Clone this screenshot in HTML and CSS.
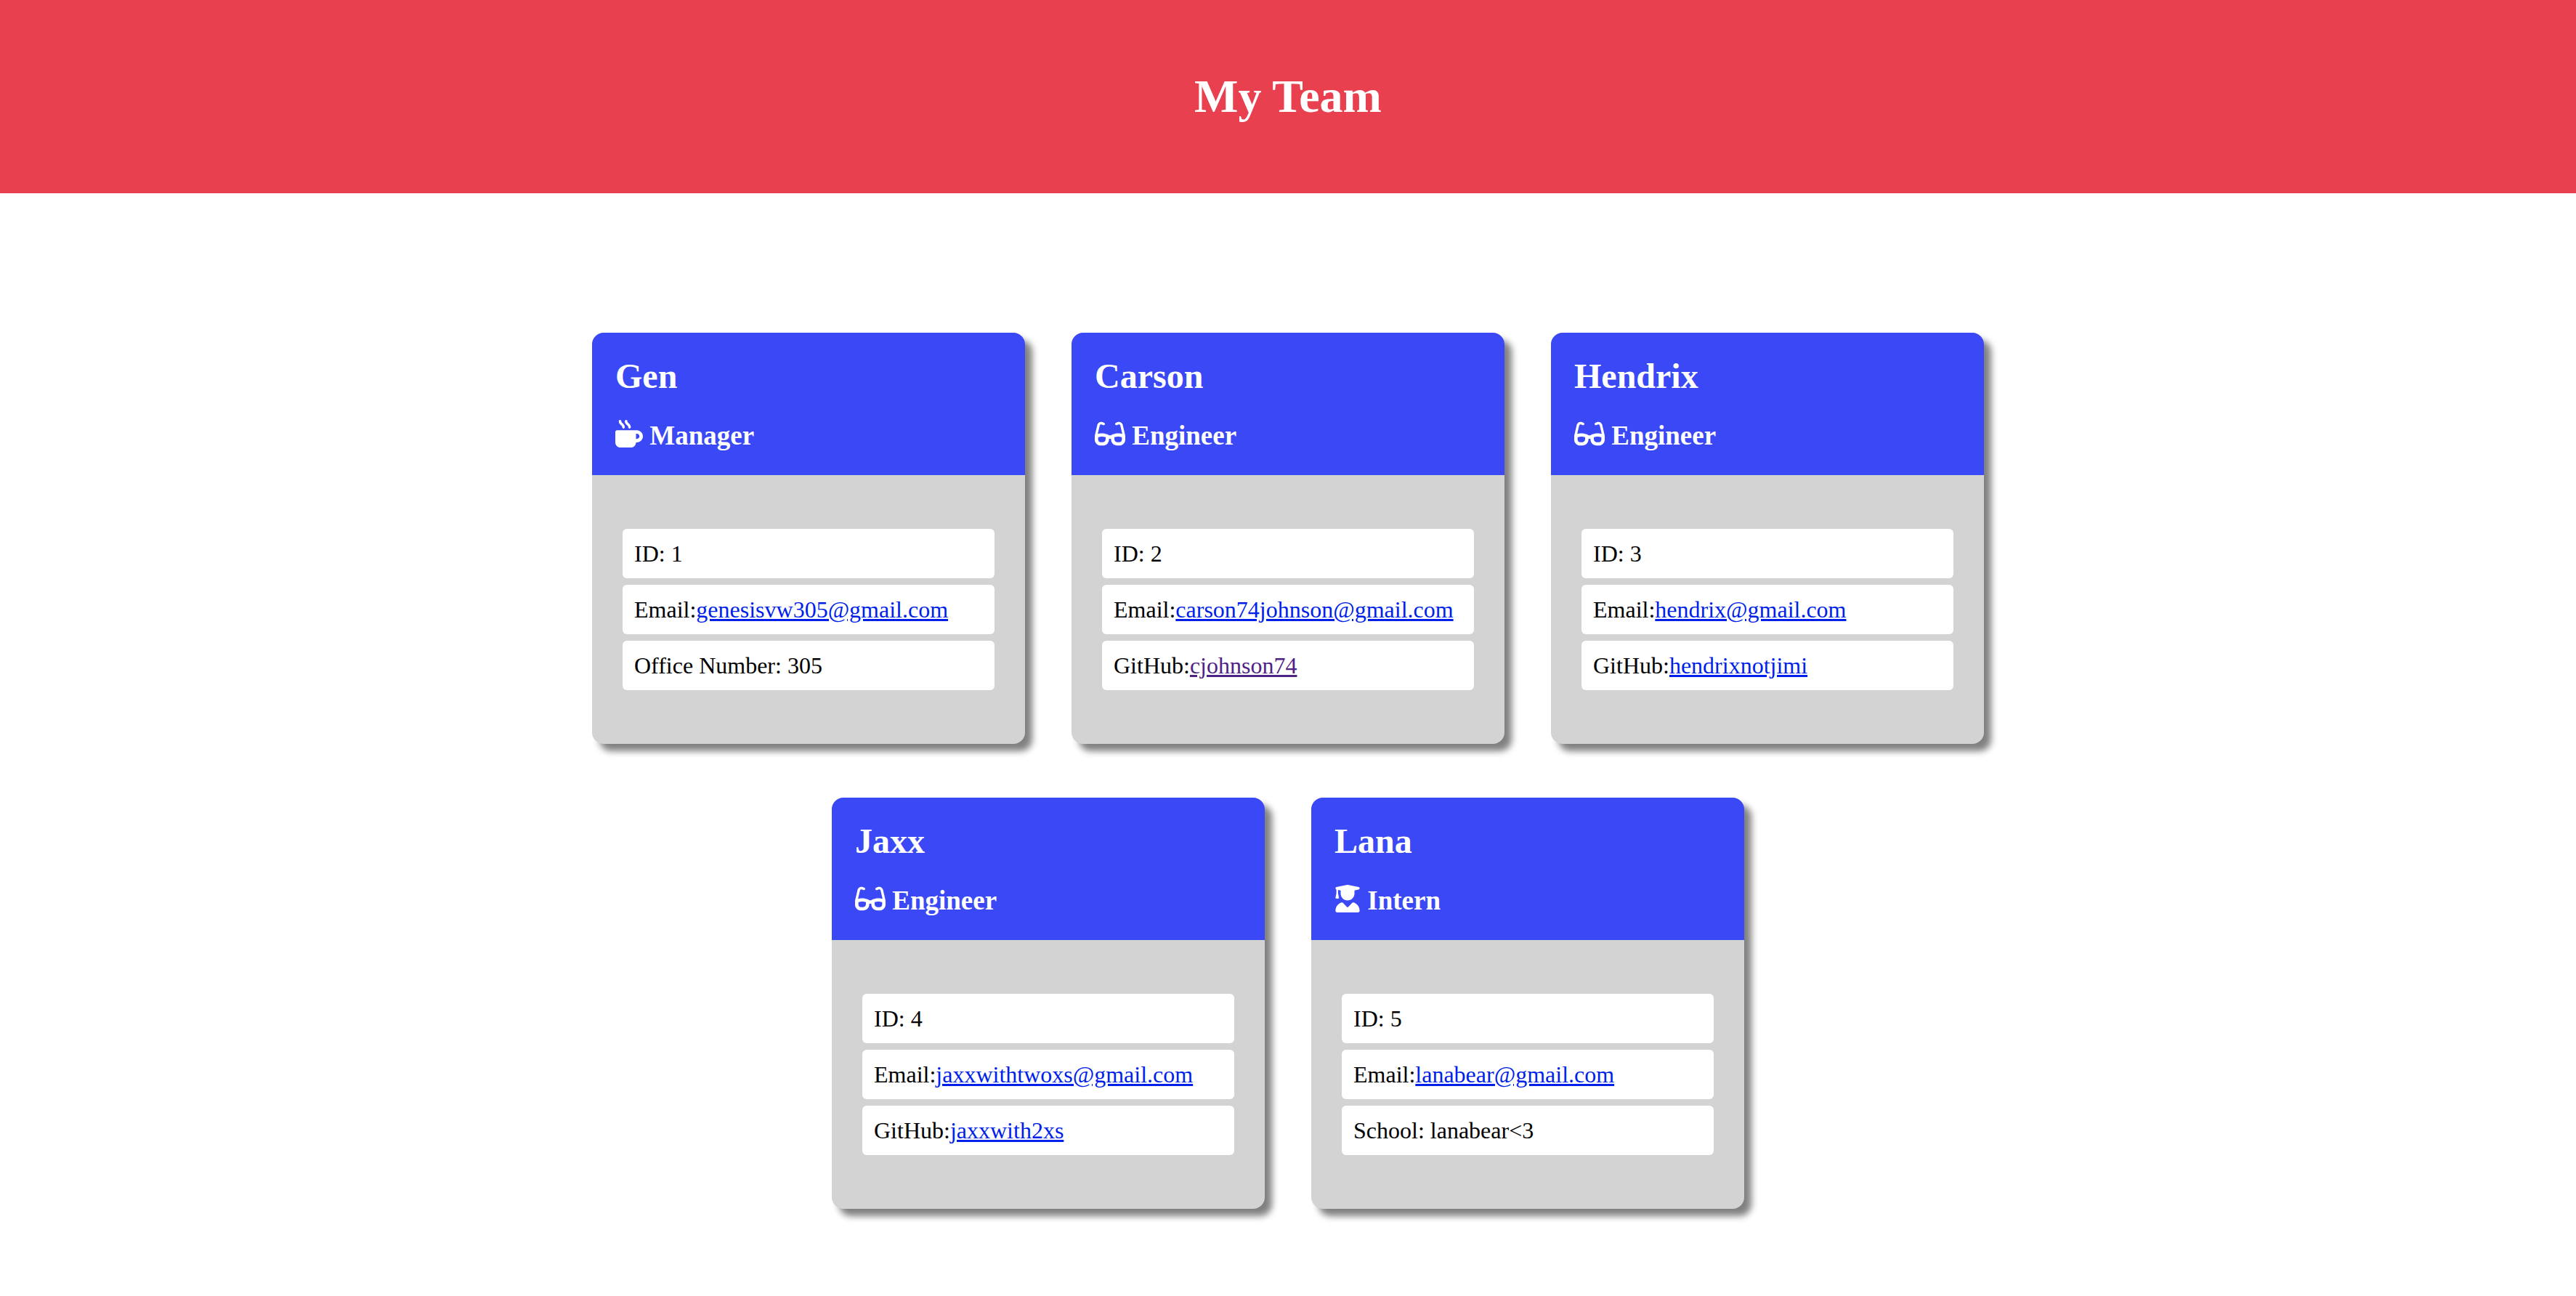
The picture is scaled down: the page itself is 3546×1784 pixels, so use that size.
FILE: index.html
```html
<!DOCTYPE html>
<html lang="en">
<head>
<meta charset="utf-8">
<meta name="viewport" content="width=device-width, initial-scale=1">
<title>My Team</title>
<link rel="stylesheet" href="styles.css">
</head>
<body>
<svg class="sprite" aria-hidden="true">
  <symbol id="mug" viewBox="0 0 512 512">
    <path d="M88 0C74.700 0 64 10.700 64 24c0 38.900 23.400 59.400 39.100 73.100l1.100 1C120.500 112.300 128 119.900 128 136c0 13.300 10.700 24 24 24s24-10.700 24-24c0-38.900-23.400-59.400-39.100-73.100l-1.100-1C119.500 47.700 112 40.100 112 24c0-13.300-10.700-24-24-24zM32 192c-17.700 0-32 14.300-32 32V416c0 53 43 96 96 96H288c53 0 96-43 96-96h16c61.900 0 112-50.100 112-112s-50.100-112-112-112H352 32zm352 64h16c26.500 0 48 21.500 48 48s-21.500 48-48 48H384V256zM224 24c0-13.300-10.700-24-24-24s-24 10.700-24 24c0 38.900 23.400 59.400 39.100 73.100l1.100 1C232.500 112.300 240 119.900 240 136c0 13.300 10.700 24 24 24s24-10.700 24-24c0-38.900-23.400-59.400-39.100-73.100l-1.100-1C231.500 47.700 224 40.100 224 24z"/>
  </symbol>
  <symbol id="glasses" viewBox="0 0 576 512">
    <path d="M118.600 80c-11.500 0-21.400 7.900-24 19.100L57 260.300c20.500-6.200 48.300-12.300 78.700-12.300c32.300 0 61.800 6.900 82.800 13.500c10.600 3.300 19.300 6.700 25.400 9.200c3.100 1.300 5.500 2.400 7.300 3.200c.9 .4 1.600 .7 2.100 1l.6 .3 .2 .1c0 0 .1 0 .1 0c0 0 0 0 0 0s0 0 0 0L247.900 288s0 0 0 0l6.300-12.700c5.800 2.900 10.400 7.300 13.500 12.700h40.600c3.100-5.300 7.700-9.800 13.500-12.700l6.300 12.700s0 0 0 0c-6.300-12.700-6.300-12.700-6.300-12.700s0 0 0 0s0 0 0 0c0 0 .1 0 .1 0l.2-.1 .6-.3c.5-.2 1.200-.6 2.100-1c1.800-.8 4.200-1.900 7.300-3.200c6.100-2.600 14.800-5.900 25.400-9.200c21-6.600 50.400-13.500 82.800-13.500c30.400 0 58.200 6.100 78.700 12.300L481.400 99.100c-2.600-11.200-12.600-19.100-24-19.100c-3.100 0-6.200 .6-9.200 1.800L416.900 94.300c-12.300 4.900-26.300-1.100-31.200-13.400s1.100-26.300 13.400-31.200l31.300-12.500c8.600-3.400 17.700-5.200 27-5.200c33.800 0 63.100 23.300 70.800 56.200l43.900 188c1.700 7.300 2.900 14.700 3.500 22.100c.3 1.900 .5 3.800 .5 5.700v6.700V352v16c0 61.900-50.100 112-112 112H419.700c-59.400 0-108.500-46.400-111.800-105.800L306.600 352H269.400l-1.200 22.200C264.900 433.600 215.800 480 156.300 480H112C50.100 480 0 429.900 0 368V352 310.700 304c0-1.900 .2-3.800 .5-5.700c.6-7.400 1.800-14.800 3.500-22.100l43.900-188C55.500 55.300 84.800 32 118.600 32c9.200 0 18.400 1.800 27 5.200l31.300 12.500c12.300 4.900 18.300 18.900 13.400 31.200s-18.900 18.300-31.200 13.400L127.800 81.800c-2.900-1.200-6-1.800-9.200-1.800zM64 325.400V368c0 26.500 21.500 48 48 48h44.300c25.500 0 46.500-19.900 47.900-45.300l2.500-45.600c-2.300-.8-4.900-1.700-7.500-2.500c-17.200-5.400-39.900-10.500-63.600-10.500c-23.700 0-46.200 5.100-63.200 10.500c-3.100 1-5.900 1.900-8.500 2.900zM512 368V325.400c-2.600-.9-5.500-1.900-8.500-2.900c-17-5.400-39.500-10.500-63.200-10.500c-23.700 0-46.400 5.100-63.600 10.500c-2.700 .8-5.200 1.700-7.500 2.500l2.500 45.600c1.400 25.400 22.500 45.300 47.900 45.300H464c26.500 0 48-21.500 48-48z"/>
  </symbol>
  <symbol id="graduate" viewBox="0 0 448 512">
    <path d="M219.300 .5c3.100-.6 6.300-.6 9.400 0l200 40C439.900 42.700 448 52.600 448 64s-8.100 21.300-19.300 23.500L352 102.900V160c0 70.700-57.300 128-128 128S96 230.700 96 160V102.900L48 93.300v65.100l15.700 78.400c.9 4.700-.3 9.600-3.300 13.300s-7.600 5.900-12.400 5.900H16c-4.800 0-9.300-2.100-12.400-5.900s-4.300-8.600-3.300-13.300L16 158.400V86.600C6.500 83.300 0 74.300 0 64C0 52.600 8.100 42.700 19.300 40.500l200-40zM111.900 327.700c10.500-3.400 21.800 .4 29.400 8.500l71 75.500c6.300 6.700 17 6.700 23.300 0l71-75.500c7.600-8.100 18.900-11.900 29.400-8.500C401 348.600 448 409.400 448 481.300c0 17-13.800 30.700-30.700 30.700H30.700C13.800 512 0 498.200 0 481.300c0-71.900 47-132.700 111.900-153.600z"/>
  </symbol>
</svg>

<header class="page-header">
  <h1 class="page-title">My Team</h1>
</header>

<main class="team">
  <article class="card">
    <header class="card-header">
      <h2 class="name">Gen</h2>
      <h3 class="role"><svg class="icon icon-mug" aria-hidden="true"><use href="#mug"/></svg> Manager</h3>
    </header>
    <ul class="details">
      <li class="detail">ID: 1</li>
      <li class="detail">Email:<a class="link" href="mailto:genesisvw305@gmail.com">genesisvw305@gmail.com</a></li>
      <li class="detail">Office Number: 305</li>
    </ul>
  </article>

  <article class="card">
    <header class="card-header">
      <h2 class="name">Carson</h2>
      <h3 class="role"><svg class="icon icon-glasses" aria-hidden="true"><use href="#glasses"/></svg> Engineer</h3>
    </header>
    <ul class="details">
      <li class="detail">ID: 2</li>
      <li class="detail">Email:<a class="link" href="mailto:carson74johnson@gmail.com">carson74johnson@gmail.com</a></li>
      <li class="detail">GitHub:<a class="link link-seen" href="https://github.com/cjohnson74">cjohnson74</a></li>
    </ul>
  </article>

  <article class="card">
    <header class="card-header">
      <h2 class="name">Hendrix</h2>
      <h3 class="role"><svg class="icon icon-glasses" aria-hidden="true"><use href="#glasses"/></svg> Engineer</h3>
    </header>
    <ul class="details">
      <li class="detail">ID: 3</li>
      <li class="detail">Email:<a class="link" href="mailto:hendrix@gmail.com">hendrix@gmail.com</a></li>
      <li class="detail">GitHub:<a class="link" href="https://github.com/hendrixnotjimi">hendrixnotjimi</a></li>
    </ul>
  </article>

  <article class="card">
    <header class="card-header">
      <h2 class="name">Jaxx</h2>
      <h3 class="role"><svg class="icon icon-glasses" aria-hidden="true"><use href="#glasses"/></svg> Engineer</h3>
    </header>
    <ul class="details">
      <li class="detail">ID: 4</li>
      <li class="detail">Email:<a class="link" href="mailto:jaxxwithtwoxs@gmail.com">jaxxwithtwoxs@gmail.com</a></li>
      <li class="detail">GitHub:<a class="link" href="https://github.com/jaxxwith2xs">jaxxwith2xs</a></li>
    </ul>
  </article>

  <article class="card">
    <header class="card-header">
      <h2 class="name">Lana</h2>
      <h3 class="role"><svg class="icon icon-graduate" aria-hidden="true"><use href="#graduate"/></svg> Intern</h3>
    </header>
    <ul class="details">
      <li class="detail">ID: 5</li>
      <li class="detail">Email:<a class="link" href="mailto:lanabear@gmail.com">lanabear@gmail.com</a></li>
      <li class="detail">School: lanabear&lt;3</li>
    </ul>
  </article>
</main>
</body>
</html>
```
FILE: styles.css
```css
* {
  box-sizing: border-box;
  margin: 0;
  padding: 0;
}

body {
  background: #fff;
  color: #000;
  font-family: "Liberation Serif", "Times New Roman", Times, serif;
  font-size: 32px;
  line-height: 36px;
}

.sprite {
  display: none;
}

.page-header {
  padding: 96px 32px;
  background: #e9404f;
  color: #fff;
  text-align: center;
}

.page-title {
  font-size: 64px;
  line-height: 74px;
}

.team {
  display: flex;
  flex-wrap: wrap;
  justify-content: center;
  gap: 74px 64px;
  max-width: 2128px;
  margin: 0 auto;
  padding: 192px 32px 96px;
}

.card {
  width: 596px;
  max-width: 100%;
  overflow: hidden;
  border-radius: 16px;
  background: #d3d3d3;
  box-shadow: 10px 10px 10px gray;
}

.card-header {
  display: grid;
  gap: 32px;
  padding: 32px;
  background: #3a48f5;
  color: #fff;
}

.name {
  font-size: 48px;
  line-height: 56px;
}

.role {
  font-size: 37px;
  line-height: 44px;
}

.icon {
  height: 38px;
  fill: currentColor;
  color: #fff;
  vertical-align: -4px;
}

.icon-mug {
  width: 38px;
}

.icon-glasses {
  width: 42px;
}

.icon-graduate {
  width: 36px;
}

.details {
  display: grid;
  gap: 9px;
  padding: 74px 42px;
  list-style: none;
}

.detail {
  padding: 16px;
  border-radius: 6px;
  background: #fff;
}

.link {
  color: #001fe8;
}

.link-seen {
  color: #4f2386;
}
```
